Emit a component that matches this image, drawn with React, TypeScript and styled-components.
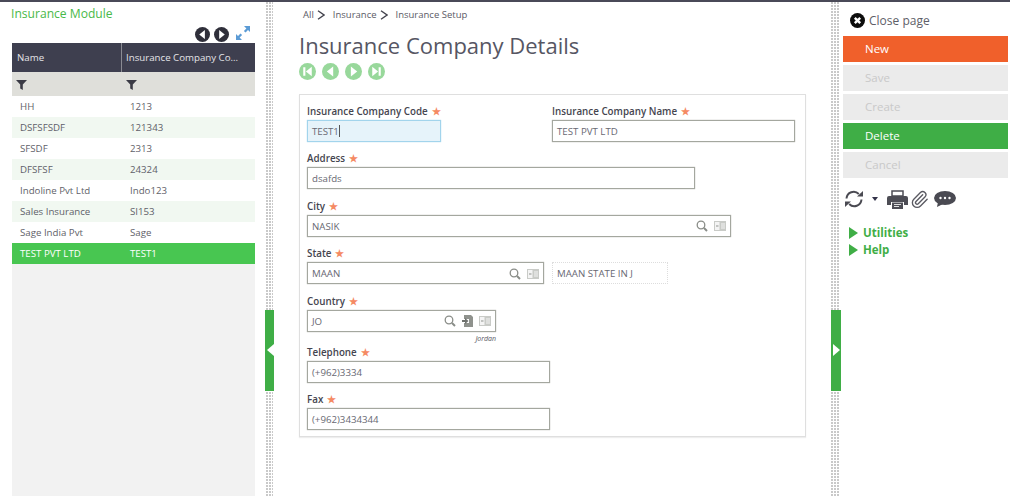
import React from "react";
import styled, { createGlobalStyle } from "styled-components";
import { Paperclip } from "lucide-react";

const Global = createGlobalStyle`
  html, body { margin: 0; padding: 0; background: #fff; }
  body { font-family: "Open Sans", "Noto Sans", "Liberation Sans", sans-serif; color: #55555f; overflow: hidden; }
  * { box-sizing: border-box; }
`;

const Page = styled.div`
  width: 1010px;
  height: 496px;
  display: flex;
  flex-direction: column;
`;
const TopBar = styled.div`
  height: 2px;
  flex: none;
  background: #4a4a58;
`;
const Body = styled.div`
  flex: 1;
  min-height: 0;
  display: flex;
`;

/* left column */
const LeftPanel = styled.aside`
  width: 266px;
  flex: none;
  padding: 0 11px 0 12px;
  display: flex;
  flex-direction: column;
`;
const ModuleTitle = styled.div`
  height: 24px;
  margin-left: -1px;
  font-size: 12.1px;
  line-height: 23px;
  color: #49b949;
`;
const GridTools = styled.div`
  height: 17px;
  display: flex;
  justify-content: flex-end;
  align-items: center;
  gap: 4px;
  padding-right: 5px;
`;
const ExpandSlot = styled.span`
  display: flex;
  margin: -4px 0 0 3px;
`;
const GridWrap = styled.div`
  flex: 1;
  background: #f2f2f2;
  display: flex;
  flex-direction: column;
`;
const HeadRow = styled.div`
  height: 29px;
  display: grid;
  grid-template-columns: 109px 1fr;
  background: #3e3f4f;
`;
const HeadCell = styled.div`
  font-size: 9.7px;
  line-height: 29px;
  padding-left: 5px;
  color: #e4e4e8;
  white-space: nowrap;
  & + & { border-left: 1px solid #8a8b93; padding-left: 4px; }
`;
const FilterRow = styled.div`
  height: 24px;
  display: grid;
  grid-template-columns: 109px 1fr;
  align-items: center;
  background: #dfdfda;
`;
const FilterCell = styled.div`
  display: flex;
  padding-left: 4px;
  & + & { padding-left: 5px; }
`;
const Row = styled.div<{ $variant?: "plain" | "alt" | "selected" }>`
  height: 21px;
  display: grid;
  grid-template-columns: 110px 1fr;
  padding-left: 8px;
  font-size: 9.7px;
  line-height: 22px;
  color: ${(p) => (p.$variant === "selected" ? "#fff" : "#5f5f69")};
  background: ${(p) =>
    p.$variant === "selected" ? "#48c651" : p.$variant === "alt" ? "#f1f8f1" : "#fff"};
`;

/* splitter */
const Splitter = styled.div<{ $w: number }>`
  width: ${(p) => p.$w}px;
  flex: none;
  position: relative;
  background-image: radial-gradient(circle at 1px 1px, #c9c9c9 1px, transparent 1.2px);
  background-size: 3px 3px;
`;
const Handle = styled.div<{ $side: "left" | "right" }>`
  position: absolute;
  top: 308px;
  width: ${(p) => (p.$side === "left" ? 9 : 10)}px;
  height: 81px;
  background: #3fae46;
  ${(p) => (p.$side === "left" ? "left: -1px;" : "left: 0;")}
  &::after {
    content: "";
    position: absolute;
    top: 34px;
    border-top: 6px solid transparent;
    border-bottom: 6px solid transparent;
    ${(p) =>
      p.$side === "left"
        ? "right: 0; border-right: 7px solid #fff;"
        : "left: 2px; border-left: 7px solid #fff;"}
  }
`;

/* center */
const Center = styled.main`
  width: 558px;
  flex: none;
  padding: 0 0 0 26px;
`;
const Crumbs = styled.div`
  height: 25px;
  padding-left: 4px;
  display: flex;
  align-items: center;
  font-size: 9.5px;
  color: #5b5b66;
`;
const Crumb = styled.span`
  display: inline-flex;
  align-items: center;
  margin-right: 8px;
  & svg { margin-left: 3px; }
`;
const PageTitle = styled.h1`
  margin: 0;
  height: 33px;
  font-weight: 400;
  font-size: 22px;
  line-height: 37px;
  color: #565663;
`;
const RecordNav = styled.div`
  height: 23px;
  display: flex;
  align-items: center;
  gap: 6px;
`;
const Card = styled.section`
  margin-top: 11px;
  width: 507px;
  height: 343px;
  border: 1px solid #dfdfdf;
  box-shadow: 0 1px 1px #eee;
  padding: 8px 7px 0 7px;
`;
const FormRow = styled.div<{ $h?: number }>`
  display: flex;
  height: ${(p) => p.$h ?? 47.4}px;
`;
const Field = styled.div<{ $w: number }>`
  width: ${(p) => p.$w}px;
  flex: none;
`;
const Label = styled.div`
  height: 17px;
  font-size: 9.8px;
  font-weight: 600;
  line-height: 16px;
  color: #45454f;
  white-space: nowrap;
`;
const Star = styled.span`
  color: #f58a63;
  margin-left: 4px;
  font-size: 10px;
`;
const InputBox = styled.div<{ $w: number; $focus?: boolean; $dotted?: boolean }>`
  width: ${(p) => p.$w}px;
  height: 22px;
  display: flex;
  align-items: center;
  gap: 6px;
  padding: 1px 4px 0;
  font-size: 9.7px;
  color: #686872;
  white-space: nowrap;
  background: ${(p) => (p.$focus ? "#e6f3fa" : "#fff")};
  border: ${(p) =>
    p.$focus ? "1px solid #a2d4ec" : p.$dotted ? "1px dotted #ddd" : "1px solid #a4a79f"};
  box-shadow: ${(p) => (p.$dotted ? "none" : p.$focus ? "0 0 1px #a2d4ec" : "0 0 1px #a4a79f")};
`;
const Value = styled.span`
  flex: 1;
`;
const Caret = styled.span`
  display: inline-block;
  width: 1px;
  height: 12px;
  background: #555;
  vertical-align: -2px;
`;
const Hint = styled.div<{ $w: number }>`
  width: ${(p) => p.$w}px;
  text-align: right;
  font-size: 7px;
  font-style: italic;
  line-height: 11px;
  margin-top: 1px;
  color: #55555f;
`;

/* right */
const RightPanel = styled.aside`
  flex: 1;
  min-width: 0;
  padding: 0 2px 0 4px;
`;
const ClosePage = styled.div`
  height: 34px;
  padding: 3px 0 0 7px;
  display: flex;
  align-items: center;
  gap: 4px;
  font-size: 12px;
  color: #5e5e68;
`;
const ActionList = styled.div`
  display: flex;
  flex-direction: column;
  gap: 3px;
`;
const Action = styled.div<{ $kind: "new" | "ok" | "off" }>`
  height: 26px;
  padding-left: 22px;
  font-size: 11.5px;
  line-height: 26px;
  color: ${(p) => (p.$kind === "off" ? "#c9c9c9" : "#fff")};
  background: ${(p) =>
    p.$kind === "new" ? "#f0602b" : p.$kind === "ok" ? "#3fae46" : "#ebebeb"};
`;
const IconRow = styled.div`
  height: 24px;
  margin-top: 9px;
  padding-left: 2px;
  display: flex;
  align-items: center;
`;
const ClipSlot = styled.span`
  display: flex;
  margin: 0 5px 0 2px;
`;
const Tree = styled.div`
  margin-top: 13px;
  padding-left: 6px;
`;
const TreeItem = styled.div`
  height: 17px;
  display: flex;
  align-items: center;
  gap: 5px;
  font-size: 11.5px;
  font-weight: 700;
  color: #3fae46;
`;
const Arrow = styled.span`
  border-top: 6px solid transparent;
  border-bottom: 6px solid transparent;
  border-left: 9px solid #3fae46;
`;

const Round = ({ dir, color, size, bg = "#fff" }: { dir: "l" | "r" | "first" | "last"; color: string; size: number; bg?: string }) => (
  <svg width={size} height={size} viewBox="0 0 16 16">
    <circle cx="8" cy="8" r="8" fill={color} />
    {dir === "l" && <path d="M10.5 3.2v9.6L4.5 8z" fill={bg} />}
    {dir === "r" && <path d="M5.5 3.2v9.6L11.5 8z" fill={bg} />}
    {dir === "first" && <path d="M4 4h2v8H4zM12 3.5v9L6.5 8z" fill={bg} />}
    {dir === "last" && <path d="M10 4h2v8h-2zM4 3.5v9L9.5 8z" fill={bg} />}
  </svg>
);
const Funnel = () => (
  <svg width="11" height="11" viewBox="0 0 11 11">
    <path d="M0 1h11L6.8 5.5V11L4.2 9.5V5.5z" fill="#3b3b45" />
  </svg>
);
const Expand = () => (
  <svg width="14" height="14" viewBox="0 0 14 14" fill="#5b9bd5">
    <path d="M8 0h6v6l-2-2-2.5 2.5-1.6-1.6L10.4 2.4z" />
    <path d="M0 14V8l2 2 2.5-2.5 1.6 1.6L3.6 11.6 6 14z" />
  </svg>
);
const Chevron = () => (
  <svg width="8" height="10" viewBox="0 0 8 10" fill="none" stroke="#44444e" strokeWidth="1.4">
    <path d="M1 .8 7 5 1 9.2" />
  </svg>
);
const Search = () => (
  <svg width="12" height="12" viewBox="0 0 12 12" fill="none" stroke="#8a8d88" style={{ flex: "none" }}>
    <circle cx="5" cy="5" r="3.8" strokeWidth="1.3" />
    <path d="M8 8l3 3" strokeWidth="2" />
  </svg>
);
const CardIcon = () => (
  <svg width="12" height="10" viewBox="0 0 12 10" style={{ flex: "none" }}>
    <rect width="12" height="10" fill="#c9cbc7" />
    <rect x="1" y="1" width="4.5" height="8" fill="#f4f4f4" />
    <path d="M2 5h2.5" stroke="#8f928d" strokeWidth="1" />
    <path d="M7 3h4M7 5h4M7 7h4" stroke="#f4f4f4" strokeWidth="1" />
  </svg>
);
const Jump = () => (
  <svg width="11" height="12" viewBox="0 0 11 12" style={{ flex: "none" }}>
    <path d="M2 0h7l2 2v10H2V8h5V4H2z" fill="#8f928d" />
    <path d="M0 5h3V3l3.5 3L3 9V7H0z" fill="#6f726e" />
  </svg>
);
const CloseIcon = () => (
  <svg width="15" height="15" viewBox="0 0 15 15">
    <circle cx="7.5" cy="7.5" r="7.5" fill="#0d0d0d" />
    <path d="M4.8 4.8l5.4 5.4M10.2 4.8l-5.4 5.4" stroke="#fff" strokeWidth="2.4" />
  </svg>
);
const Refresh = () => (
  <svg width="18" height="18" viewBox="0 0 18 18" fill="none" stroke="#4a4a52" strokeWidth="2">
    <path d="M1.5 8.5a7.2 7.2 0 0 1 12.3-4.5" />
    <path d="M16.5 9.5a7.2 7.2 0 0 1-12.3 4.5" />
    <path d="M12 6.5h6V1z" fill="#4a4a52" stroke="none" />
    <path d="M6 11.5H0V17z" fill="#4a4a52" stroke="none" />
  </svg>
);
const Drop = () => (
  <svg width="6" height="4" viewBox="0 0 6 4" style={{ margin: "0 9px 0 9px" }}>
    <path d="M0 0h6L3 4z" fill="#33334a" />
  </svg>
);
const Printer = () => (
  <svg width="21" height="19" viewBox="0 0 21 19">
    <path d="M5 1h11v5H5z" fill="none" stroke="#4d4d55" strokeWidth="1.5" />
    <path d="M2 6h17a2 2 0 0 1 2 2v7h-4v-3H4v3H0V8a2 2 0 0 1 2-2z" fill="#4d4d55" />
    <path d="M5 12.5h11V19H5z" fill="#4d4d55" />
    <path d="M7 14.5h7M7 16.5h5" stroke="#ddd" strokeWidth="1" />
  </svg>
);
const Chat = () => (
  <svg width="22" height="16" viewBox="0 0 22 16">
    <ellipse cx="11" cy="7" rx="11" ry="7" fill="#4a4a52" />
    <path d="M4 11l-1 5 6-3z" fill="#4a4a52" />
    <circle cx="6.5" cy="7" r="1.2" fill="#fff" />
    <circle cx="11" cy="7" r="1.2" fill="#fff" />
    <circle cx="15.5" cy="7" r="1.2" fill="#fff" />
  </svg>
);

const rows = [
  ["HH", "1213"],
  ["DSFSFSDF", "121343"],
  ["SFSDF", "2313"],
  ["DFSFSF", "24324"],
  ["Indoline Pvt Ltd", "Indo123"],
  ["Sales Insurance", "SI153"],
  ["Sage India Pvt", "Sage"],
  ["TEST PVT LTD", "TEST1"],
];

const F = ({ label, w, children }: { label: string; w: number; children: React.ReactNode }) => (
  <Field $w={w}>
    <Label>
      {label}
      <Star>★</Star>
    </Label>
    {children}
  </Field>
);

export default function App() {
  return (
    <Page>
      <Global />
      <TopBar />
      <Body>
        <LeftPanel>
          <ModuleTitle>Insurance Module</ModuleTitle>
          <GridTools>
            <Round dir="l" color="#2f2f3a" size={15} />
            <Round dir="r" color="#2f2f3a" size={15} />
            <ExpandSlot><Expand /></ExpandSlot>
          </GridTools>
          <GridWrap>
            <HeadRow>
              <HeadCell>Name</HeadCell>
              <HeadCell>Insurance Company Co...</HeadCell>
            </HeadRow>
            <FilterRow>
              <FilterCell><Funnel /></FilterCell>
              <FilterCell><Funnel /></FilterCell>
            </FilterRow>
            {rows.map((r, i) => (
              <Row key={r[0]} $variant={i === 7 ? "selected" : i % 2 ? "alt" : "plain"}>
                <span>{r[0]}</span>
                <span>{r[1]}</span>
              </Row>
            ))}
          </GridWrap>
        </LeftPanel>
        <Splitter $w={7}><Handle $side="left" /></Splitter>
        <Center>
          <Crumbs>
            <Crumb>All<Chevron /></Crumb>
            <Crumb>Insurance<Chevron /></Crumb>
            <Crumb>Insurance Setup</Crumb>
          </Crumbs>
          <PageTitle>Insurance Company Details</PageTitle>
          <RecordNav>
            <Round dir="first" color="#98d89b" size={17} />
            <Round dir="l" color="#98d89b" size={17} />
            <Round dir="r" color="#98d89b" size={17} />
            <Round dir="last" color="#98d89b" size={17} />
          </RecordNav>
          <Card>
            <FormRow>
              <F label="Insurance Company Code" w={245}>
                <InputBox $w={134} $focus><Value>TEST1<Caret /></Value></InputBox>
              </F>
              <F label="Insurance Company Name" w={244}>
                <InputBox $w={243}><Value>TEST PVT LTD</Value></InputBox>
              </F>
            </FormRow>
            <FormRow>
              <F label="Address" w={400}>
                <InputBox $w={388}><Value>dsafds</Value></InputBox>
              </F>
            </FormRow>
            <FormRow>
              <F label="City" w={430}>
                <InputBox $w={424}><Value>NASIK</Value><Search /><CardIcon /></InputBox>
              </F>
            </FormRow>
            <FormRow>
              <F label="State" w={245}>
                <InputBox $w={237}><Value>MAAN</Value><Search /><CardIcon /></InputBox>
              </F>
              <Field $w={116}>
                <Label />
                <InputBox $w={116} $dotted><Value>MAAN STATE IN J</Value></InputBox>
              </Field>
            </FormRow>
            <FormRow $h={51}>
              <F label="Country" w={189}>
                <InputBox $w={189}><Value>JO</Value><Search /><Jump /><CardIcon /></InputBox>
                <Hint $w={189}>Jordan</Hint>
              </F>
            </FormRow>
            <FormRow>
              <F label="Telephone" w={243}>
                <InputBox $w={243}><Value>(+962)3334</Value></InputBox>
              </F>
            </FormRow>
            <FormRow>
              <F label="Fax" w={243}>
                <InputBox $w={243}><Value>(+962)3434344</Value></InputBox>
              </F>
            </FormRow>
          </Card>
        </Center>
        <Splitter $w={8}><Handle $side="right" /></Splitter>
        <RightPanel>
          <ClosePage><CloseIcon />Close page</ClosePage>
          <ActionList>
            <Action $kind="new">New</Action>
            <Action $kind="off">Save</Action>
            <Action $kind="off">Create</Action>
            <Action $kind="ok">Delete</Action>
            <Action $kind="off">Cancel</Action>
          </ActionList>
          <IconRow>
            <Refresh /><Drop /><Printer />
            <ClipSlot><Paperclip size={19} strokeWidth={1.7} color="#5a5a62" /></ClipSlot>
            <Chat />
          </IconRow>
          <Tree>
            <TreeItem><Arrow />Utilities</TreeItem>
            <TreeItem><Arrow />Help</TreeItem>
          </Tree>
        </RightPanel>
      </Body>
    </Page>
  );
}
